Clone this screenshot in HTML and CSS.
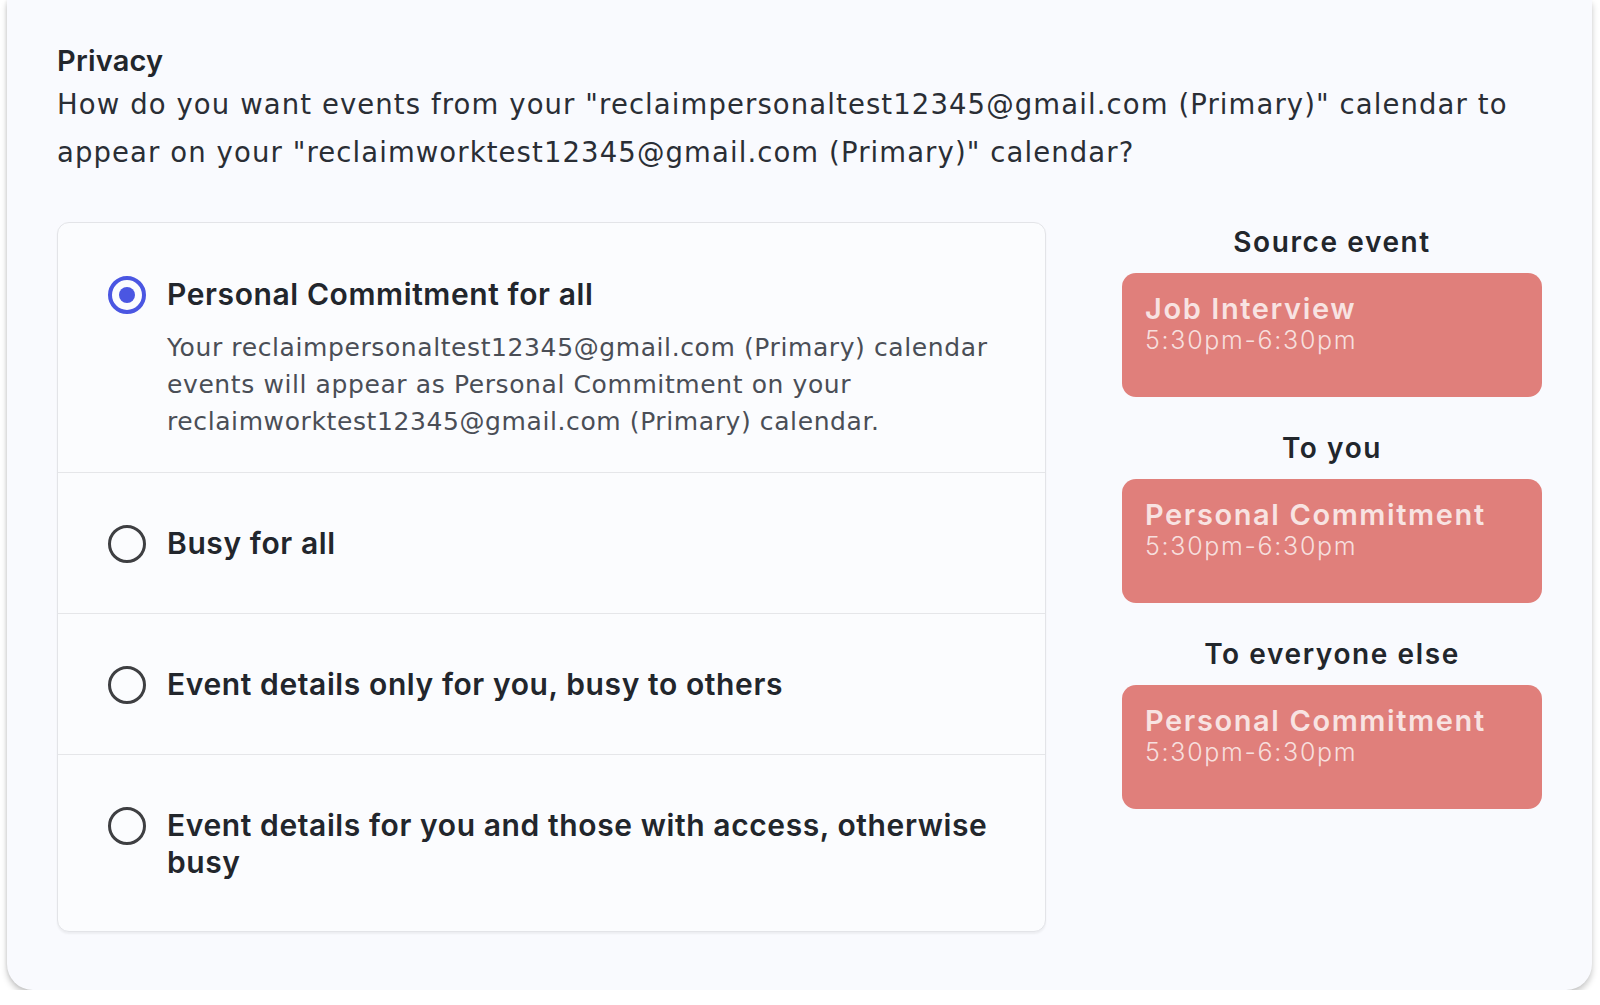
FILE: index.html
```html
<!DOCTYPE html>
<html lang="en">
<head>
<meta charset="utf-8">
<title>Privacy</title>
<link rel="stylesheet" href="styles.css">
</head>
<body>
<div class="panel">
  <h2 class="heading">Privacy</h2>
  <p class="question">How do you want events from your "reclaimpersonaltest12345@gmail.com (Primary)" calendar to appear on your "reclaimworktest12345@gmail.com (Primary)" calendar?</p>
  <div class="content">
    <div class="options">
      <div class="option option--first">
        <span class="radio radio--checked"></span>
        <div class="option-body">
          <div class="option-title">Personal Commitment for all</div>
          <div class="option-desc">Your reclaimpersonaltest12345@gmail.com (Primary) calendar events will appear as Personal Commitment on your reclaimworktest12345@gmail.com (Primary) calendar.</div>
        </div>
      </div>
      <div class="option">
        <span class="radio"></span>
        <div class="option-body">
          <div class="option-title">Busy for all</div>
        </div>
      </div>
      <div class="option">
        <span class="radio"></span>
        <div class="option-body">
          <div class="option-title">Event details only for you, busy to others</div>
        </div>
      </div>
      <div class="option">
        <span class="radio"></span>
        <div class="option-body">
          <div class="option-title">Event details for you and those with access, otherwise busy</div>
        </div>
      </div>
    </div>
    <div class="preview">
      <div class="preview-section">
        <div class="preview-label">Source event</div>
        <div class="event">
          <div class="event-title">Job Interview</div>
          <div class="event-time">5:30pm-6:30pm</div>
        </div>
      </div>
      <div class="preview-section">
        <div class="preview-label">To you</div>
        <div class="event">
          <div class="event-title">Personal Commitment</div>
          <div class="event-time">5:30pm-6:30pm</div>
        </div>
      </div>
      <div class="preview-section">
        <div class="preview-label">To everyone else</div>
        <div class="event">
          <div class="event-title">Personal Commitment</div>
          <div class="event-time">5:30pm-6:30pm</div>
        </div>
      </div>
    </div>
  </div>
</div>
</body>
</html>
```
FILE: styles.css
```css
* { box-sizing: border-box; }

html, body {
  margin: 0;
  padding: 0;
  background: #ffffff;
}

body {
  font-family: Inter, "Open Sans", "Liberation Sans", sans-serif;
  color: #22262c;
}

.panel {
  width: 1585px;
  margin-left: 7px;
  padding: 42px 50px 58px 50px;
  background: #f9fafe;
  border-radius: 0 0 26px 26px;
  box-shadow: 0 4px 6px rgba(0, 0, 0, 0.22), -1px 0 3px rgba(0, 0, 0, 0.06);
}

.heading {
  margin: 0;
  font-size: 29px;
  line-height: 38px;
  font-weight: 600;
  letter-spacing: 0.2px;
  color: #22262c;
}

.question {
  margin: 0;
  font-family: "DejaVu Sans", Inter, sans-serif;
  font-size: 27.5px;
  line-height: 48px;
  font-weight: 400;
  letter-spacing: 1.1px;
  color: #2a2e35;
}

.content {
  margin-top: 46px;
  display: flex;
  gap: 76px;
  align-items: flex-start;
}

.options {
  width: 989px;
  flex: none;
  background: #fbfcfe;
  border: 1.5px solid #e3e4e8;
  border-radius: 12px;
  box-shadow: 0 2px 2px rgba(0, 0, 0, 0.05);
}

.option {
  display: flex;
  align-items: flex-start;
  gap: 21px;
  padding: 52px 20px 50px 50px;
  border-top: 1.5px solid #e5e6e9;
}

.option--first {
  border-top: none;
  padding-top: 53px;
  padding-bottom: 32px;
}

.radio {
  flex: none;
  width: 38px;
  height: 38px;
  border-radius: 50%;
  border: 3px solid #3e3f42;
  display: flex;
  align-items: center;
  justify-content: center;
}

.radio--checked {
  border: 4px solid #4a56e2;
}

.radio--checked::after {
  content: "";
  width: 16px;
  height: 16px;
  border-radius: 50%;
  background: #4a56e2;
}

.option-body {
  flex: 1;
  min-width: 0;
}

.option-title {
  font-size: 30px;
  line-height: 37px;
  font-weight: 600;
  letter-spacing: 0.6px;
  color: #22262c;
}

.option-desc {
  margin-top: 16px;
  font-family: "DejaVu Sans", Inter, sans-serif;
  font-size: 25px;
  line-height: 37px;
  font-weight: 400;
  letter-spacing: 0.6px;
  color: #4a4e56;
}

.preview {
  width: 420px;
  flex: none;
  display: flex;
  flex-direction: column;
  gap: 31px;
}

.preview-label {
  text-align: center;
  font-size: 28px;
  line-height: 40px;
  font-weight: 600;
  letter-spacing: 1.6px;
  color: #22262c;
  margin-bottom: 11px;
}

.event {
  height: 124px;
  padding: 20px 23px;
  background: #e07f7b;
  border-radius: 14px;
}

.event-title {
  font-size: 29px;
  line-height: 32px;
  font-weight: 600;
  letter-spacing: 1.6px;
  color: rgba(255, 255, 255, 0.78);
}

.event-time {
  font-size: 25px;
  line-height: 30px;
  font-weight: 300;
  letter-spacing: 1.7px;
  color: rgba(255, 255, 255, 0.75);
}
```
